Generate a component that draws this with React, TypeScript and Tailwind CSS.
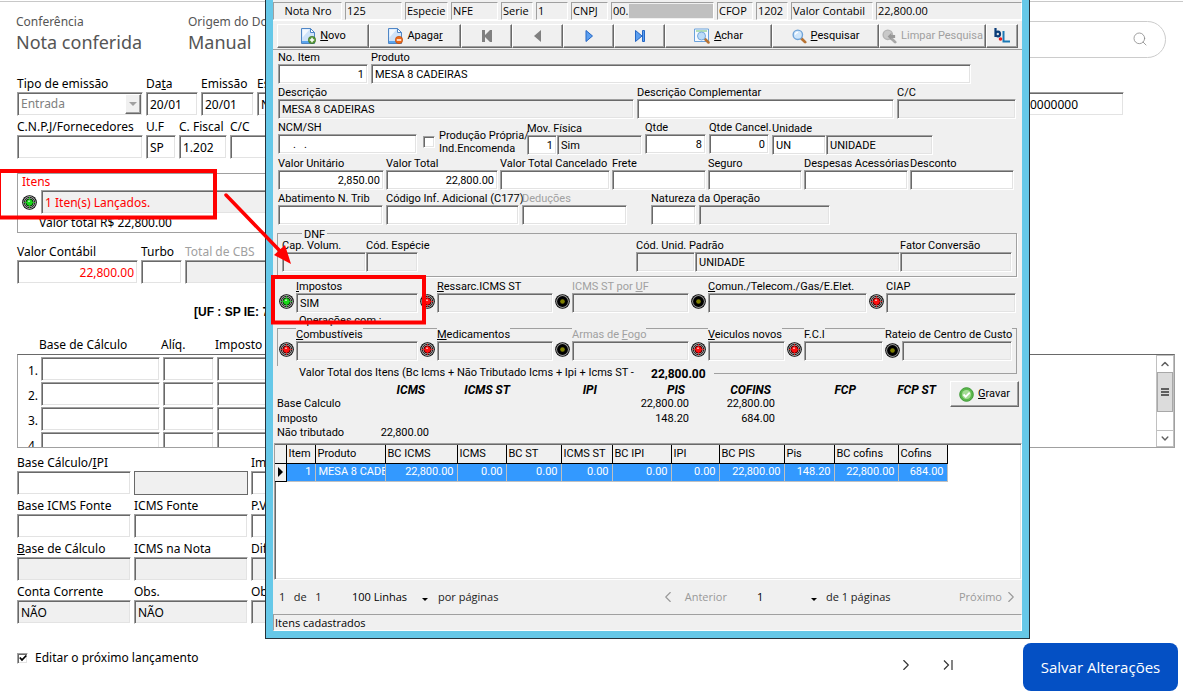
import type { ReactNode } from "react";
import { ChevronRight, ChevronLeft, ChevronUp, ChevronDown, Search } from "lucide-react";

const sunken =
    "border border-t-[#a0a0a0] border-l-[#a0a0a0] border-r-white border-b-white shadow-[inset_1px_1px_0_#696969,inset_-1px_-1px_0_#e3e3e3] outline-none";
const raised =
    "border border-t-white border-l-white border-r-[#696969] border-b-[#696969] shadow-[inset_-1px_-1px_0_#a0a0a0]";

type FieldProps = {
    label?: ReactNode;
    name: string;
    value?: string;
    width: string;
    gray?: boolean;
    right?: boolean;
    muted?: boolean;
    red?: boolean;
    masked?: boolean;
    led?: keyof typeof ledColors;
};

/* Field of the page behind the window */
function PageField({ label, name, value = "", width, gray, right, muted, red }: FieldProps) {
    return (
        <div className={`flex shrink-0 flex-col ${width}`}>
            <label htmlFor={name} className={`h-4 whitespace-nowrap leading-4 ${muted ? "text-[#a0a0a0]" : ""}`}>
                {label}
            </label>
            <input
                id={name}
                aria-label={name}
                defaultValue={value}
                className={`h-6 w-full px-[3px] ${sunken} ${gray ? "bg-[#f0f0f0]" : "bg-white"} ${right ? "text-right" : ""} ${red ? "text-[#ff0000]" : ""}`}
            />
        </div>
    );
}

/* Smaller field used inside the items window */
function Field({ label, name, value = "", width, gray, right, muted, masked, led }: FieldProps) {
    return (
        <div className={`flex shrink-0 flex-col items-start ${width}`}>
            <label
                htmlFor={name}
                className={`h-[13px] whitespace-nowrap leading-[13px] ${muted ? "text-[#a0a0a0]" : ""} ${masked ? "bg-[#f0f0f0]" : ""}`}
            >
                {label}
            </label>
            <div className="flex w-full gap-0.5">
                {led && <Led color={led} />}
                <input
                    id={name}
                    aria-label={name}
                    defaultValue={value}
                    className={`h-5 min-w-0 flex-1 px-[3px] ${sunken} ${gray ? "bg-[#f0f0f0]" : "bg-white"} ${right ? "text-right" : ""}`}
                />
            </div>
        </div>
    );
}

/* Field with a status light at its left */
function LedField({ color, ...field }: FieldProps & { color: keyof typeof ledColors }) {
    return (
        <div className="flex items-end gap-0.5">
            <Led color={color} />
            <Field {...field} gray />
        </div>
    );
}

const ledColors = {
    red: { ring: "#b4b4b4", inner: "#5c0000", core: "#ff1010" },
    green: { ring: "#b4b4b4", inner: "#064006", core: "#18d818" },
    off: { ring: "#9a9a9a", inner: "#000000", core: "#808000" },
};

function Led({ color }: { color: keyof typeof ledColors }) {
    const c = ledColors[color];
    return (
        <svg viewBox="0 0 15 15" className="mb-1 size-[15px] shrink-0">
            <circle cx="7.5" cy="7.5" r="7.3" fill="#000" />
            <circle cx="7.5" cy="7.5" r="6.4" fill={c.ring} />
            {color !== "off" && (
                <circle cx="7.5" cy="7.5" r="5.2" fill="none" stroke="#222" strokeWidth="1" />
            )}
            <circle cx="7.5" cy="7.5" r={color === "off" ? 5.4 : 4} fill={c.inner} />
            {color !== "off" && <path d="M7.5 2v11M2 7.5h11" stroke={c.core} strokeWidth="1" strokeDasharray="1 1" />}
            <circle cx="7.5" cy="7.5" r={color === "off" ? 2.3 : 3} fill={c.core} />
            {color !== "off" && <rect x="6" y="5.5" width="2" height="1.5" fill="#fff" opacity="0.6" />}
        </svg>
    );
}

function PageIcon({ minus }: { minus?: boolean }) {
    return (
        <svg viewBox="0 0 16 16" className="size-4 shrink-0">
            <path d="M1.5.5h9l4 4v11h-13z" fill="#cfe3fa" stroke="#4f86c6" />
            <path d="M2.5 1.5h7l-7 8z" fill="#f4f9ff" />
            <path d="M10.5.5v4h4z" fill="#fff" stroke="#4f86c6" />
            <path d="M2 13h12v2H2z" fill="#5aa5ee" />
            <circle cx="12" cy="12" r="3.7" fill={minus ? "#ec6a1c" : "#5a9a3a"} stroke={minus ? "#b54708" : "#39701f"} strokeWidth=".6" />
            <path d={minus ? "M9.8 12h4.4" : "M9.8 12h4.4M12 9.8v4.4"} stroke="#fff" strokeWidth="1.5" />
        </svg>
    );
}

function Magnifier({ disabled }: { disabled?: boolean }) {
    return (
        <svg viewBox="0 0 16 16" className="size-[15px] shrink-0">
            <path d="M9.5 9.5l4.5 4.5" stroke={disabled ? "#a8a8a8" : "#b87333"} strokeWidth="3" strokeLinecap="round" />
            <circle cx="6.2" cy="6.2" r="5" fill={disabled ? "#c8c8c8" : "#cfe6fb"} stroke={disabled ? "#b4b4b4" : "#6fa3d8"} strokeWidth="1.5" />
            {disabled ? (
                <path d="M6 8l4-4v2.500h4v3h-4V12z" fill="#999" />
            ) : (
                <path d="M3.500 6a3 3 0 013-2.500" stroke="#fff" strokeWidth="1.300" fill="none" />
            )}
        </svg>
    );
}

function FindIcon() {
    return (
        <svg viewBox="0 0 16 16" className="size-4 shrink-0">
            <path d="M.5 1h14v12.500H.5z" fill="#f6faff" stroke="#6ba2dc" />
            <path d="M2 3h11" stroke="#6cc070" />
            <path d="M10.500 10.500l4 4" stroke="#b87333" strokeWidth="2.500" strokeLinecap="round" />
            <circle cx="7.500" cy="8" r="4" fill="#bcdcf8" stroke="#76a9de" />
        </svg>
    );
}

function ToolButton({ width, label, children, disabled }: { width: string; label?: string; children: ReactNode; disabled?: boolean }) {
    return (
        <button
            aria-label={label}
            disabled={disabled}
            className={`flex h-6 shrink-0 items-center justify-center gap-1 whitespace-nowrap bg-[#f0f0f0] ${raised} ${width} ${disabled ? "text-[#a0a0a0]" : ""}`}
        >
            {children}
        </button>
    );
}

const headerCells = [
    { text: "Nota Nro", width: "w-[69px] text-center" },
    { text: "125", width: "w-[57px]" },
    { text: "Especie", width: "w-[43px]" },
    { text: "NFE", width: "w-[47px]" },
    { text: "Serie", width: "w-8" },
    { text: "1", width: "w-8" },
    { text: "CNPJ", width: "w-[37px]" },
    { text: "00.", width: "w-[103px]", hidden: true },
    { text: "CFOP", width: "w-[36px]" },
    { text: "1202", width: "w-8" },
    { text: "Valor Contabil", width: "w-[82px]" },
    { text: "22,800.00", width: "flex-1" },
];

const totals = [
    { name: "ICMS", width: "w-[72px]", base: "", tax: "", free: "22,800.00" },
    { name: "ICMS ST", width: "w-[85px]", base: "", tax: "", free: "" },
    { name: "IPI", width: "w-[87px]", base: "", tax: "", free: "" },
    { name: "PIS", width: "w-[88px]", base: "22,800.00", tax: "148.20", free: "" },
    { name: "COFINS", width: "w-[86px]", base: "22,800.00", tax: "684.00", free: "" },
    { name: "FCP", width: "w-[85px]", base: "", tax: "", free: "" },
    { name: "FCP ST", width: "w-[80px]", base: "", tax: "", free: "" },
];

const columns = [
    { name: "Item", width: "w-[29px]", value: "1" },
    { name: "Produto", width: "w-[70px]", value: "MESA 8 CADEIRAS" },
    { name: "BC ICMS", width: "w-[72px]", value: "22,800.00" },
    { name: "ICMS", width: "w-[49px]", value: "0.00" },
    { name: "BC ST", width: "w-[55px]", value: "0.00" },
    { name: "ICMS ST", width: "w-[51px]", value: "0.00" },
    { name: "BC IPI", width: "w-[59px]", value: "0.00" },
    { name: "IPI", width: "w-[48px]", value: "0.00" },
    { name: "BC PIS", width: "w-[65px]", value: "22,800.00" },
    { name: "Pis", width: "w-[50px]", value: "148.20" },
    { name: "BC cofins", width: "w-[64px]", value: "22,800.00" },
    { name: "Cofins", width: "w-[49px]", value: "684.00" },
];

function InvoicePage() {
    return (
        <main className="flex flex-col pt-px pl-[17px]">
            <header className="-ml-[17px] flex h-[75px] items-center justify-between border-t border-[#c8c8c8] pr-[17px] pl-4 text-[#555]">
                <div className="flex pb-[14px]">
                    <div className="w-[172px]">
                        <p className="text-[12px] leading-5">Conferência</p>
                        <p className="text-[18px] leading-5">Nota conferida</p>
                    </div>
                    <div className="w-[172px]">
                        <p className="text-[12px] leading-5">Origem do Documento</p>
                        <p className="text-[18px] leading-5">Manual</p>
                    </div>
                </div>
                <label className="flex h-[37px] w-[360px] items-center rounded-full border border-[#ccc] px-[17px]">
                    <input type="search" aria-label="Pesquisar" className="min-w-0 flex-1 outline-none" />
                    <Search className="size-4 text-[#888]" strokeWidth={1.2} />
                </label>
            </header>

            <div className="flex flex-col gap-[3px]">
                <div className="flex justify-between pr-[59px]">
                    <div className="flex gap-[3px]">
                        <div className="flex w-[126px] flex-col">
                            <label htmlFor="tipo" className="h-4 leading-4">Tipo de emissão</label>
                            <div className="relative flex">
                                <select id="tipo" disabled className={`h-6 w-full appearance-none bg-white px-[3px] text-[#808080] opacity-100 ${sunken}`}>
                                    <option>Entrada</option>
                                </select>
                                <span className={`pointer-events-none absolute top-0.5 right-0.5 flex h-5 w-4 items-center justify-center bg-[#f0f0f0] ${raised}`}>
                                    <span className="border-x-4 border-t-4 border-x-transparent border-t-[#a0a0a0]" />
                                </span>
                            </div>
                        </div>
                        <PageField name="data" label={<>Da<u>t</u>a</>} value="20/01" width="w-[52px]" />
                        <PageField name="emissao" label="Emissão" value="20/01" width="w-[53px]" />
                        <PageField name="especie" label="Espécie" value="NFE" width="w-[60px]" />
                    </div>
                    <PageField name="serie" value="0000000" width="w-[98px]" />
                </div>
                <div className="flex gap-[3px]">
                    <PageField name="cnpj" label="C.N.P.J/Fornecedores" width="w-[126px]" />
                    <PageField name="uf" label="U.F" value="SP" width="w-[30px]" />
                    <PageField name="cfiscal" label="C. Fiscal" value="1.202" width="w-12" />
                    <PageField name="cc" label="C/C" width="w-20" />
                </div>
            </div>

            <section className="mt-[14px] flex h-[60px] w-4/5 flex-col border border-[#a0a0a0] pl-1">
                <label htmlFor="itens" className="h-4 leading-4 text-[#ff0000]">Itens</label>
                <div className="flex items-end gap-1">
                    <Led color="green" />
                    <input id="itens" defaultValue="1 Iten(s) Lançados." className={`h-6 w-[600px] bg-[#f0f0f0] px-[3px] text-[#ff0000] ${sunken}`} />
                </div>
                <p className="pl-[17px] leading-[18px]">Valor total R$ 22,800.00</p>
            </section>

            <div className="mt-[11px] flex gap-[3px]">
                <PageField name="valor-contabil" label="Valor Contábil" value="22,800.00" width="w-[121px]" right red />
                <PageField name="turbo" label="Turbo" width="w-[41px]" />
                <PageField name="cbs" label="Total de CBS" width="w-[120px]" gray muted />
            </div>

            <p className="mt-5 pl-[177px] font-['Liberation_Sans',sans-serif] text-[12px] leading-4 font-bold">[UF : SP IE: 7</p>

            <div className="mt-[17px] flex h-[17px] leading-4">
                <span className="w-[122px] pl-[22px]">Base de Cálculo</span>
                <span className="w-[54px] pl-[22px]">Alíq.</span>
                <span className="pl-[22px]">Imposto</span>
            </div>
            <section className="mr-2 flex h-[94px] justify-between overflow-hidden border border-[#a0a0a0] border-t-[#696969]">
                <div className="flex flex-col gap-px pt-0.5">
                    {[1, 2, 3, 4].map((n) => (
                        <div key={n} className="flex h-6 shrink-0 items-center gap-[3px]">
                            <label htmlFor={`base-${n}`} className="w-5 pt-1 text-right">{n}.</label>
                            <input id={`base-${n}`} className={`h-6 w-[119px] ${sunken}`} />
                            <input aria-label={`Alíquota ${n}`} className={`h-6 w-[51px] ${sunken}`} />
                            <input aria-label={`Imposto ${n}`} className={`h-6 w-[119px] ${sunken}`} />
                        </div>
                    ))}
                </div>
                <div className="flex w-[18px] flex-col border border-[#c0c0c0] text-[#606060]">
                    <ChevronUp className="h-4 w-4 shrink-0" strokeWidth={3} viewBox="-4 -4 32 32" />
                    <div className="flex h-10 flex-col items-center justify-center gap-px border border-[#a8a8a8] bg-[#dcdcdc]">
                        <span className="h-0.5 w-2 bg-[#606060]" />
                        <span className="h-0.5 w-2 bg-[#606060]" />
                        <span className="h-0.5 w-2 bg-[#606060]" />
                    </div>
                    <ChevronDown className="mt-auto h-4 w-4 shrink-0 border-t border-[#c0c0c0]" strokeWidth={3} viewBox="-4 -4 32 32" />
                </div>
            </section>

            <div className="mt-[7px] flex flex-col gap-[3px]">
                <div className="flex gap-[3px]">
                    <PageField name="base-ipi" label={<>Base Cálculo/<u>I</u>PI</>} width="w-[114px]" />
                    <div className="flex w-[114px] items-end">
                        <input aria-label="IPI" className="h-6 w-full border border-[#696969] bg-[#f0f0f0]" />
                    </div>
                    <PageField name="imposto-ipi" label="Imposto" width="w-[114px]" />
                </div>
                <div className="flex gap-[3px]">
                    <PageField name="base-fonte" label="Base ICMS Fonte" width="w-[114px]" />
                    <PageField name="icms-fonte" label="ICMS Fonte" width="w-[114px]" />
                    <PageField name="pv" label="P.V." width="w-[114px]" />
                </div>
                <div className="flex gap-[3px]">
                    <PageField name="base-calculo" label={<><u>B</u>ase de Cálculo</>} width="w-[114px]" gray />
                    <PageField name="icms-nota" label="ICMS na Nota" width="w-[114px]" gray />
                    <PageField name="diferenca" label="Diferença" width="w-[114px]" gray />
                </div>
                <div className="flex gap-[3px]">
                    <PageField name="conta" label="Conta Corrente" value="NÃO" width="w-[114px]" gray />
                    <PageField name="obs" label="Obs." value="NÃO" width="w-[114px]" gray />
                    <PageField name="obs2" label="Obs." width="w-[114px]" gray />
                </div>
            </div>

            <footer className="mt-[19px] flex justify-between pr-[5px]">
                <label className="mt-[7px] flex h-4 items-center gap-[7px]">
                    <input type="checkbox" defaultChecked className="peer sr-only" />
                    <span className={`flex size-[11px] items-center justify-center bg-white ${sunken}`}>
                        <svg viewBox="0 0 8 8" className="size-2"><path d="M.8 3.500l2.200 2.500 4.300-4.500" fill="none" stroke="#000" strokeWidth="1.800" /></svg>
                    </span>
                    Editar o próximo lançamento
                </label>
                <div className="flex items-center">
                    <button aria-label="Próximo" className="pb-1"><ChevronRight className="size-[18px] text-[#333]" strokeWidth={1.5} /></button>
                    <button aria-label="Último" className="mr-[66px] ml-6 pb-1">
                        <svg viewBox="0 0 18 18" className="size-[18px]"><path d="M5 4.500l4.500 4.500L5 13.500M13 4v10" fill="none" stroke="#333" strokeWidth="1.200" /></svg>
                    </button>
                    <button className="h-12 w-[155px] rounded-lg bg-[#0450c4] font-['Open_Sans',sans-serif] text-[15px] text-white">Salvar Alterações</button>
                </div>
            </footer>
        </main>
    );
}

function ItemsWindow() {
    return (
        <div
            role="dialog"
            aria-label="Itens"
            className="absolute top-0 left-[265px] w-[765px] border border-t-0 border-[#26323a] font-[Roboto,sans-serif] text-[11px] text-black"
        >
            <div className="flex flex-col border-x-[7px] border-b-[7px] border-[#66c8e8] bg-[#f0f0f0]">
                <div className="flex gap-[3px] pt-0.5 font-['Open_Sans',sans-serif]">
                    {headerCells.map((cell) => (
                        <div
                            key={cell.text}
                            className={`flex h-[18px] shrink-0 gap-px border border-t-[#a0a0a0] border-l-[#a0a0a0] border-r-white border-b-white pl-px leading-4 whitespace-nowrap ${cell.width}`}
                        >
                            <span className={cell.text === "Nota Nro" ? "flex-1" : ""}>{cell.text}</span>
                            {cell.hidden && <span className="my-px flex-1 bg-[#c0c0c0]" />}
                        </div>
                    ))}
                </div>

                <div className="flex h-[30px] border-t border-b border-t-white border-b-[#a0a0a0] pt-[3px] pl-1">
                    <ToolButton width="w-[92px]"><PageIcon /><span><u>N</u>ovo</span></ToolButton>
                    <ToolButton width="w-[92px]"><PageIcon minus /><span>Apaga<u>r</u></span></ToolButton>
                    <ToolButton width="w-[51px]" label="Primeiro">
                        <svg viewBox="0 0 12 12" className="size-3"><path d="M1 0h3v5l5-5h2v12H9L4 7v5H1z" fill="#808080" /></svg>
                    </ToolButton>
                    <ToolButton width="w-[51px]" label="Anterior">
                        <svg viewBox="0 0 12 12" className="size-3"><path d="M9 0v12L2 6z" fill="#808080" /></svg>
                    </ToolButton>
                    <ToolButton width="w-[51px]" label="Seguinte">
                        <svg viewBox="0 0 12 12" className="size-3"><path d="M3 .5v11L9.500 6z" fill="#5b9ff0" stroke="#2466c4" /></svg>
                    </ToolButton>
                    <ToolButton width="w-[51px]" label="Último">
                        <svg viewBox="0 0 12 12" className="size-3"><path d="M1.500 .5v11L8 6zM8.500 .5h2v11h-2z" fill="#5b9ff0" stroke="#2466c4" /></svg>
                    </ToolButton>
                    <ToolButton width="w-[107px]"><FindIcon /><span><u>A</u>char</span></ToolButton>
                    <ToolButton width="w-[107px]"><Magnifier /><span><u>P</u>esquisar</span></ToolButton>
                    <ToolButton width="w-[107px]" disabled><Magnifier disabled /><span>Limpar Pesquisa</span></ToolButton>
                    <ToolButton width="w-8" label="bL">
                        <svg viewBox="0 0 16 16" className="size-4">
                            <path d="M1.500 0v9M2 5.500c0-2.500 4-2.500 4 .5s-4 3-4 .5" fill="none" stroke="#0a3c78" strokeWidth="2.200" />
                            <circle cx="6.500" cy="11" r="1.800" fill="#f01818" />
                            <path d="M9.500 3v10.500H16" fill="none" stroke="#1c78b4" strokeWidth="2" />
                        </svg>
                    </ToolButton>
                </div>

                <div className="flex flex-col gap-0.5 pt-px pl-[5px]">
                    <div className="flex gap-[3px]">
                        <Field name="no-item" label="No. Item" value="1" width="w-[90px]" right />
                        <Field name="produto" label="Produto" value="MESA 8 CADEIRAS" width="w-[600px]" />
                    </div>
                    <div className="flex gap-[3px]">
                        <Field name="descricao" label="Descrição" value="MESA 8 CADEIRAS" width="w-[356px]" gray />
                        <Field name="complementar" label="Descrição Complementar" width="w-[257px]" />
                        <Field name="item-cc" label="C/C" width="w-[119px]" gray />
                    </div>
                    <div className="flex gap-[3px]">
                        <Field name="ncm" label="NCM/SH" value="    .   ." width="w-[139px]" />
                        <label className="flex w-[104px] items-center gap-1 pt-2 pl-[3px] leading-[13px] whitespace-nowrap">
                            <input type="checkbox" className={`size-3 shrink-0 appearance-none bg-white ${sunken}`} />
                            <span>Produção Própria/<br />Ind.Encomenda</span>
                        </label>
                        <div className="flex items-end">
                            <Field name="mov" label="Mov. Física" value="1" width="w-[30px]" right />
                            <input aria-label="Sim" defaultValue="Sim" className={`h-5 w-[85px] bg-[#f0f0f0] px-[3px] ${sunken}`} />
                        </div>
                        <Field name="qtde" label="Qtde" value="8" width="w-[61px]" right />
                        <Field name="qtde-cancel" label="Qtde Cancel." value="0" width="w-[60px]" right />
                        <div className="flex items-end">
                            <Field name="unidade" label="Unidade" value="UN" width="w-[54px]" />
                            <input aria-label="UNIDADE" defaultValue="UNIDADE" className={`h-5 w-[107px] bg-[#f0f0f0] px-[3px] ${sunken}`} />
                        </div>
                    </div>
                    <div className="flex gap-0.5">
                        <Field name="unitario" label="Valor Unitário" value="2,850.00" width="w-[106px]" right />
                        <Field name="total" label="Valor Total" value="22,800.00" width="w-[112px]" right />
                        <Field name="cancelado" label="Valor Total Cancelado" width="w-[110px]" />
                        <Field name="frete" label="Frete" width="w-[94px]" />
                        <Field name="seguro" label="Seguro" width="w-[94px]" />
                        <Field name="despesas" label="Despesas Acessórias" width="w-[104px]" />
                        <Field name="desconto" label="Desconto" width="w-[104px]" />
                    </div>
                    <div className="flex gap-[3px]">
                        <Field name="abatimento" label="Abatimento N. Trib" width="w-[105px]" />
                        <Field name="codigo-inf" label="Código Inf. Adicional (C177)" width="w-[133px]" />
                        <Field name="deducoes" label="Deduções" width="w-[105px]" muted />
                        <div className="flex items-end gap-[3px] pl-[21px]">
                            <Field name="natureza" label="Natureza da Operação" width="w-[45px]" />
                            <input aria-label="Natureza" className={`h-5 w-[131px] bg-[#f0f0f0] ${sunken}`} />
                        </div>
                    </div>
                </div>

                <fieldset className="mt-[3px] mr-[5px] ml-1 h-[49px] border border-[#a0a0a0] pl-1 shadow-[1px_1px_0_#fff]">
                    <legend className="ml-5 h-[10px] px-0.5 leading-[14px]">DNF</legend>
                    <div className="flex items-end pt-px">
                        <Field name="volume" label="Cap. Volum." width="w-[84px]" gray />
                        <Field name="cod-especie" label="Cód. Espécie" width="w-[52px]" gray />
                        <div className="ml-auto flex items-end pr-1">
                            <Field name="cod-unid" label="Cód. Unid. Padrão" width="w-[59px]" gray />
                            <input aria-label="Unidade padrão" defaultValue="UNIDADE" className={`h-5 w-[205px] bg-[#f0f0f0] px-[3px] ${sunken}`} />
                            <Field name="fator" label="Fator Conversão" width="w-[112px]" gray />
                        </div>
                    </div>
                </fieldset>

                <div className="mt-[3px] flex items-end gap-0.5 pl-[6px]">
                    <LedField color="green" name="impostos" label={<><u>I</u>mpostos</>} value="SIM" width="w-[122px]" />
                    <LedField color="red" name="ressarc" label={<><u>R</u>essarc.ICMS ST</>} width="w-[116px]" />
                    <LedField color="off" name="icms-uf" label={<>ICMS ST por <u>U</u>F</>} width="w-[117px]" muted />
                    <LedField color="off" name="comun" label={<><u>C</u>omun./Telecom./Gas/E.Elet.</>} width="w-[159px]" />
                    <LedField color="red" name="ciap" label="CIAP" width="w-[130px]" />
                </div>

                <p className="h-[15px] overflow-hidden pl-[26px] leading-4">Operações com :</p>
                <div className="mr-[5px] ml-1 flex h-[38px] border border-b-0 border-[#a0a0a0] pl-px">
                    <div className="-mt-px flex items-start gap-0.5">
                        <LedField color="red" name="combustiveis" label={<><u>C</u>ombustíveis</>} width="w-[122px]" masked />
                        <LedField color="red" name="medicamentos" label={<><u>M</u>edicamentos</>} width="w-[116px]" masked />
                        <LedField color="off" name="armas" label={<>Armas de <u>F</u>ogo</>} width="w-[117px]" muted masked />
                        <LedField color="red" name="veiculos" label={<><u>V</u>eiculos novos</>} width="w-[77px]" masked />
                        <LedField color="red" name="fci" label="F.C.I" width="w-[79px]" masked />
                        <div className="flex items-end [&_svg]:mt-0.5">
                            <Field name="rateio" label="Rateio de Centro de Custo" width="w-[127px]" led="off" gray masked />
                        </div>
                    </div>
                </div>
                <div className="mr-[5px] flex h-[15px] items-center pl-[26px]">
                    <span className="w-[352px]">Valor Total dos Itens (Bc Icms + Não Tributado Icms + Ipi + Icms ST -</span>
                    <strong className="text-[12px]">22,800.00</strong>
                    <span className="ml-2 h-2 flex-1 self-start border-r border-b border-[#a0a0a0]" />
                </div>

                <div className="flex h-[62px] items-start justify-between pr-[3px] pl-1">
                    <table className="mt-0.5 w-[660px] table-fixed border-collapse text-right">
                        <thead>
                            <tr className="h-[14px] leading-[14px]">
                                <th className="w-[80px]" aria-label="Totais" />
                                {totals.map((t) => (
                                    <th key={t.name} className={`pr-1 text-[12px] font-bold italic ${t.width}`}>{t.name}</th>
                                ))}
                            </tr>
                        </thead>
                        <tbody>
                            <tr className="leading-[14px]">
                                <th className="text-left font-normal whitespace-nowrap">Base Calculo</th>
                                {totals.map((t) => <td key={t.name}>{t.base}</td>)}
                            </tr>
                            <tr className="leading-[15px]">
                                <th className="text-left font-normal whitespace-nowrap">Imposto</th>
                                {totals.map((t) => <td key={t.name}>{t.tax}</td>)}
                            </tr>
                            <tr className="leading-[14px]">
                                <th className="text-left font-normal whitespace-nowrap">Não tributado</th>
                                {totals.map((t) => <td key={t.name}>{t.free}</td>)}
                            </tr>
                        </tbody>
                    </table>
                    <button className={`flex h-[26px] w-[69px] items-center justify-center gap-1 bg-[#f0f0f0] ${raised}`}>
                        <svg viewBox="0 0 15 15" className="size-[15px]">
                            <circle cx="7.500" cy="7.500" r="6.800" fill="#5cb84c" stroke="#3f9a38" />
                            <circle cx="7.500" cy="7.500" r="4.500" fill="#a4dc94" />
                            <path d="M4.500 7.500l2.200 2.200 4-4" fill="none" stroke="#fff" strokeWidth="1.800" />
                        </svg>
                        <span><u>G</u>ravar</span>
                    </button>
                </div>

                <div className="ml-px h-[137px] overflow-hidden border border-t-[#a0a0a0] border-l-[#a0a0a0] border-r-white border-b-white bg-white shadow-[inset_1px_1px_0_#696969,inset_-1px_-1px_0_#e3e3e3]">
                    <table className="mt-px w-[672px] table-fixed border-collapse">
                        <thead>
                            <tr className="h-[18px] bg-[#f0f0f0] text-left leading-4">
                                <th className="w-[11px] border-r border-b border-black" aria-label="Linha" />
                                {columns.map((c) => (
                                    <th key={c.name} className={`border-r border-b border-black pl-0.5 font-normal whitespace-nowrap ${c.width}`}>{c.name}</th>
                                ))}
                            </tr>
                        </thead>
                        <tbody>
                            <tr className="h-[18px] bg-[#3399ff] text-right leading-4 text-white">
                                <td className="border-r border-b border-black bg-[#f0f0f0]">
                                    <svg viewBox="0 0 10 12" className="h-3 w-[10px]"><path d="M3 1v10l5-5z" fill="#000" /></svg>
                                </td>
                                {columns.map((c) => (
                                    <td
                                        key={c.name}
                                        className={`overflow-hidden border-r border-b border-[#c0c0c0] whitespace-nowrap ${c.name === "Produto" ? "pl-[3px] text-left" : "pr-[3px]"}`}
                                    >
                                        {c.value}
                                    </td>
                                ))}
                            </tr>
                        </tbody>
                    </table>
                </div>

                <nav className="flex h-[34px] items-center pr-0.5 pl-1.5 font-['Open_Sans',sans-serif] text-[#222]">
                    <span className="w-[73px] whitespace-pre">1   de   1</span>
                    <button className="flex w-[76px] items-center justify-between text-black">100 Linhas<span className="mt-1 border-x-[3px] border-t-[3px] border-x-transparent border-t-black" /></button>
                    <span className="pl-2.5">por páginas</span>
                    <button disabled className="ml-auto flex items-center gap-2 text-[#999]"><ChevronLeft className="size-[18px]" strokeWidth={1.500} />Anterior</button>
                    <button className="ml-[30px] flex w-[60px] items-center justify-between text-black">1<span className="mt-1 border-x-[3px] border-t-[3px] border-x-transparent border-t-black" /></button>
                    <span className="w-[142px] pl-[9px]">de 1 páginas</span>
                    <button disabled className="flex items-center text-[#999]">Próximo<ChevronRight className="size-[18px]" strokeWidth={1.500} /></button>
                </nav>
                <div className="h-[17px] border border-t-[#a0a0a0] border-l-[#a0a0a0] border-r-white border-b-white pl-px font-['Open_Sans',sans-serif] leading-4">
                    Itens cadastrados
                </div>
            </div>
        </div>
    );
}

/* Red marks drawn over the page and the window */
function Highlights() {
    return (
        <svg className="pointer-events-none absolute top-0 left-0 h-[340px] w-[440px]" viewBox="0 0 440 340" fill="none" stroke="#ff0000">
            <rect x="-1" y="171" width="216" height="46.500" strokeWidth="4" />
            <rect x="273" y="277" width="151" height="45.500" strokeWidth="4" />
            <path d="M226 195l54 56" strokeWidth="3.500" strokeLinecap="round" />
            <path d="M291 264l-17-9 11-10z" fill="#ff0000" stroke="none" />
        </svg>
    );
}

export default function App() {
    return (
        <div className="relative min-h-screen overflow-hidden bg-white font-['Noto_Sans',sans-serif] text-[12px] text-black">
            <InvoicePage />
            <ItemsWindow />
            <Highlights />
        </div>
    );
}
